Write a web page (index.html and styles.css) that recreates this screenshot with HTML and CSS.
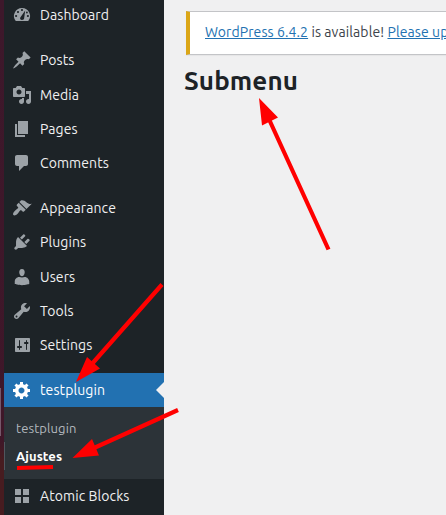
FILE: index.html
```html
<!DOCTYPE html>
<html lang="en">
<head>
<meta charset="utf-8">
<title>Submenu</title>
<link rel="stylesheet" href="styles.css">
</head>
<body>
<div class="screen">
  <div class="desktop-edge"><span class="edge-mark"></span></div>
  <nav class="sidebar">
    <a class="item"><svg class="icon" viewBox="0 0 20 20"><path fill-rule="evenodd" d="M3.76 16h12.48A7.998 7.998 0 0 0 10 3a7.998 7.998 0 0 0-6.24 13zM8.900 5a1.100 1.100 0 1 1 2.200 0 1.100 1.100 0 1 1-2.200 0zM4.900 7a1.100 1.100 0 1 1 2.200 0 1.100 1.100 0 1 1-2.200 0zM13.200 5.600l-1 7.200c0 1.400-.9 2.200-2.200 2.200-1.500 0-2.300-1.400-1.700-2.600zM3 11a1.100 1.100 0 1 1 2.200 0 1.100 1.100 0 1 1-2.200 0zM14.800 11a1.100 1.100 0 1 1 2.200 0 1.100 1.100 0 1 1-2.200 0zM14 7.500a.9.9 0 1 1 1.800 0 .9.9 0 1 1-1.800 0z"/></svg><span>Dashboard</span></a>
    <div class="gap"></div>
    <a class="item"><svg class="icon" viewBox="0 0 20 20"><path d="M10.44 3.02l1.82-1.82 6.36 6.35-1.83 1.82c-1.05-.68-2.48-.57-3.41.36l-.75.75c-.92.93-1.04 2.35-.35 3.41l-1.83 1.82-2.41-2.41-2.8 2.79c-.42.42-3.38 2.71-3.8 2.29s1.86-3.39 2.28-3.81l2.79-2.79L4.1 9.36l1.83-1.82c1.05.69 2.48.57 3.4-.36l.75-.75c.93-.92 1.05-2.35.36-3.41z"/></svg><span>Posts</span></a>
    <a class="item"><svg class="icon" viewBox="0 0 20 20"><path fill-rule="evenodd" d="M13 11V4c0-.55-.45-1-1-1h-1.67L9 1H5L3.67 3H2c-.55 0-1 .45-1 1v7c0 .55.45 1 1 1h10c.55 0 1-.45 1-1zM7 4.5c1.38 0 2.5 1.12 2.5 2.5S8.38 9.5 7 9.5 4.5 8.38 4.5 7 5.62 4.5 7 4.5zM14 6h5v10.5c0 1.38-1.12 2.5-2.5 2.5S14 17.88 14 16.5s1.12-2.5 2.5-2.5c.17 0 .34.02.5.05V9h-3V6zm-4 8.05V13h2v3.5c0 1.38-1.12 2.5-2.5 2.5S7 17.88 7 16.5 8.12 14 9.5 14c.17 0 .34.02.5.05z"/></svg><span>Media</span></a>
    <a class="item"><svg class="icon" viewBox="0 0 20 20"><path d="M6 15V2h10v13H6zm-1 1h8v2H3V5h2v11z"/></svg><span>Pages</span></a>
    <a class="item"><svg class="icon" viewBox="0 0 20 20"><path d="M5 2h9c1.1 0 2 .9 2 2v7c0 1.1-.9 2-2 2h-2l-5 5v-5H5c-1.1 0-2-.9-2-2V4c0-1.1.9-2 2-2z"/></svg><span>Comments</span></a>
    <div class="gap"></div>
    <a class="item"><svg class="icon" viewBox="0 0 20 20"><path d="M14.48 11.06L7.41 3.99l1.5-1.5c.5-.56 2.3-.47 3.51.32 1.21.8 1.43 1.28 2.91 2.1 1.18.64 2.45 1.26 4.45.85zm-.71.71L6.7 4.7 4.93 6.47c-.39.39-.39 1.02 0 1.41l1.06 1.06c.39.39.39 1.03 0 1.42-.6.6-1.43 1.11-2.21 1.69-.35.26-.7.53-1.01.84C1.43 14.23.4 16.08 1.4 17.07c.99 1 2.84-.03 4.18-1.36.31-.31.58-.66.85-1.02.57-.78 1.08-1.61 1.69-2.21.39-.39 1.02-.39 1.41 0l1.06 1.06c.39.39 1.02.39 1.41 0z"/></svg><span>Appearance</span></a>
    <a class="item"><svg class="icon" viewBox="0 0 20 20"><path d="M13.11 4.36L9.87 7.6 8 5.73l3.24-3.24c.35-.34 1.05-.2 1.56.32.52.51.66 1.21.31 1.55zm-8 1.77l.91-1.12 9.01 9.01-1.19.84c-.71.71-2.63 1.16-3.82 1.16H6.14L4.9 17.26c-.59.59-1.54.59-2.12 0-.59-.58-.59-1.53 0-2.12l1.24-1.24v-3.88c0-1.13.4-3.19 1.09-3.89zm7.26 3.97l3.24-3.24c.34-.35 1.04-.21 1.55.31.52.51.66 1.21.31 1.55l-3.24 3.25z"/></svg><span>Plugins</span></a>
    <a class="item"><svg class="icon" viewBox="0 0 20 20"><path d="M10 9.25c-2.27 0-2.73-3.44-2.73-3.44C7 4.02 7.82 2 9.97 2c2.16 0 2.98 2.02 2.71 3.81 0 0-.41 3.44-2.68 3.44zm0 1.25L12.720 10c2.390 0 4.520 2.330 4.520 4.530v2.490s-3.650 1.130-7.240 1.130c-3.650 0-7.240-1.130-7.240-1.130v-2.490c0-2.250 1.940-4.530 4.470-4.530z"/></svg><span>Users</span></a>
    <a class="item"><svg class="icon" viewBox="0 0 20 20"><path fill-rule="evenodd" d="M16.68 9.77c-1.34 1.34-3.3 1.67-4.95.99l-5.41 6.52c-.99.99-2.59.99-3.58 0s-.99-2.59 0-3.57l6.52-5.42c-.68-1.65-.35-3.61.99-4.95 1.28-1.28 3.12-1.62 4.72-1.06l-2.89 2.89 2.82 2.82 2.86-2.87c.53 1.58.18 3.39-1.08 4.65zM3.81 16.21c.4.39 1.04.39 1.43 0 .4-.4.4-1.04 0-1.43-.39-.4-1.03-.4-1.43 0-.39.39-.39 1.03 0 1.43z"/></svg><span>Tools</span></a>
    <a class="item"><svg class="icon" viewBox="0 0 20 20"><path fill-rule="evenodd" d="M18 16V4c0-.55-.45-1-1-1H4c-.55 0-1 .45-1 1v12c0 .55.45 1 1 1h13c.55 0 1-.45 1-1zM8 11h1c.55 0 1 .45 1 1s-.45 1-1 1H8v1.5c0 .28-.22.5-.5.5s-.5-.22-.5-.5V13H6c-.55 0-1-.45-1-1s.45-1 1-1h1V5.500c0-.28.22-.5.5-.5s.5.22.5.5V11zm6-2h-1c-.55 0-1-.45-1-1s.45-1 1-1h1V5.500c0-.28.22-.5.5-.5s.5.22.5.5V7h.5c.55 0 1 .45 1 1s-.45 1-1 1H15v5.500c0 .28-.22.5-.5.5s-.5-.22-.5-.5V9z"/></svg><span>Settings</span></a>
    <div class="gap gap-last"></div>
    <a class="item current"><svg class="icon" viewBox="0 0 20 20"><path fill-rule="evenodd" d="M18 12h-2.18c-.17.7-.44 1.35-.81 1.93l1.54 1.54-2.1 2.1-1.54-1.54c-.58.36-1.23.63-1.91.79V19H8v-2.180c-.68-.16-1.330-.43-1.910-.79l-1.540 1.540-2.120-2.120 1.540-1.540c-.36-.58-.63-1.230-.79-1.910H1V9.030h2.170c.16-.7.44-1.350.8-1.940L2.430 5.550l2.100-2.100 1.540 1.540c.58-.37 1.240-.64 1.930-.81V2h3v2.180c.68.16 1.330.43 1.910.79l1.540-1.540 2.120 2.120-1.540 1.540c.36.59.64 1.240.8 1.940H18V12zm-8.500 1.500c1.660 0 3-1.340 3-3s-1.340-3-3-3-3 1.340-3 3 1.340 3 3 3z"/></svg><span>testplugin</span><i class="notch"></i></a>
    <div class="submenu">
      <a class="sub">testplugin</a>
      <a class="sub active">Ajustes</a>
    </div>
    <a class="item"><svg class="icon" viewBox="0 0 20 20"><path d="M3 3h6v6H3zM11 3h6v6h-6zM3 11h6v6H3zM11 11h6v6h-6z"/></svg><span>Atomic Blocks</span></a>
  </nav>
  <main class="content">
    <div class="notice"><a>WordPress 6.4.2</a> is available! <a>Please update now</a></div>
    <h1>Submenu</h1>
  </main>
  <svg class="annotations" viewBox="0 0 446 515">
    <g stroke="#f00" stroke-width="4.200">
      <path d="M328.500 249.500L268 117M162 284.500L91 365M178 410L94 448"/>
      <path d="M17 468L53 467"/>
    </g>
    <path fill="#f00" d="M259 98L278 117.500L262 125.500ZM76 382L87 357L100 368.500ZM72.500 458L92 439L99 455.500Z"/>
  </svg>
</div>
</body>
</html>
```
FILE: styles.css
```css
body { margin: 0; overflow: hidden; }
.screen {
  position: relative;
  display: flex;
  width: 446px;
  height: 515px;
  overflow: hidden;
  background: #f0f0f1;
  color: #3c434a;
  font: 14px/20px "Ubuntu", "Noto Sans", sans-serif;
  letter-spacing: .09px;
}
.desktop-edge {
  flex: 0 0 4px;
  background: linear-gradient(#3d182b 0, #3f1729 440px, #471c20 460px, #471c20 100%);
}
.edge-mark {
  display: block;
  width: 1px;
  height: 48px;
  margin-top: 388px;
  background: #75586a;
}
.sidebar { flex: 0 0 160px; margin-top: -2px; background: #1d2327; }
.item {
  display: flex;
  align-items: center;
  height: 34.2px;
  padding-left: 8px;
  gap: 8px;
  color: #f0f0f1;
  white-space: nowrap;
}
.icon { flex: 0 0 20px; height: 20px; fill: #9ca2a7; }
.gap { height: 11.1px; }
.gap-last { height: 10.8px; }
.current { height: 34px; background: #2271b1; color: #fff; }
.current .icon { fill: #fff; }
.notch {
  margin-left: auto;
  border: 8px solid transparent;
  border-left-width: 0;
  border-right-color: #f0f0f1;
}
.submenu {
  box-sizing: border-box;
  height: 72px;
  padding-top: 7px;
  background: #2c3338;
  font-size: 13px;
}
.sub {
  display: block;
  box-sizing: border-box;
  height: 28px;
  padding-left: 12px;
  line-height: 28px;
  color: #b4b9be;
}
.active { color: #fff; font-weight: 700; box-shadow: inset 1px 0 #50575e; }
.content { flex: 1; min-width: 0; padding: 11px 0 0 20px; }
.notice {
  box-sizing: border-box;
  width: 300px;
  height: 44px;
  margin-left: 2px;
  padding: 10px 0 0 15px;
  border: 1px solid #c3c4c7;
  border-left: 4px solid #dba617;
  background: #fff;
  box-shadow: 0 1px 1px rgba(0, 0, 0, .04);
  white-space: nowrap;
}
.notice a { color: #2271b1; text-decoration: underline; }
h1 {
  margin: 9px 0 0;
  color: #1d2327;
  font-size: 26px;
  font-weight: 700;
  line-height: 34px;
}
.annotations {
  position: absolute;
  inset: 0;
  width: 446px;
  height: 515px;
  fill: none;
}
```
